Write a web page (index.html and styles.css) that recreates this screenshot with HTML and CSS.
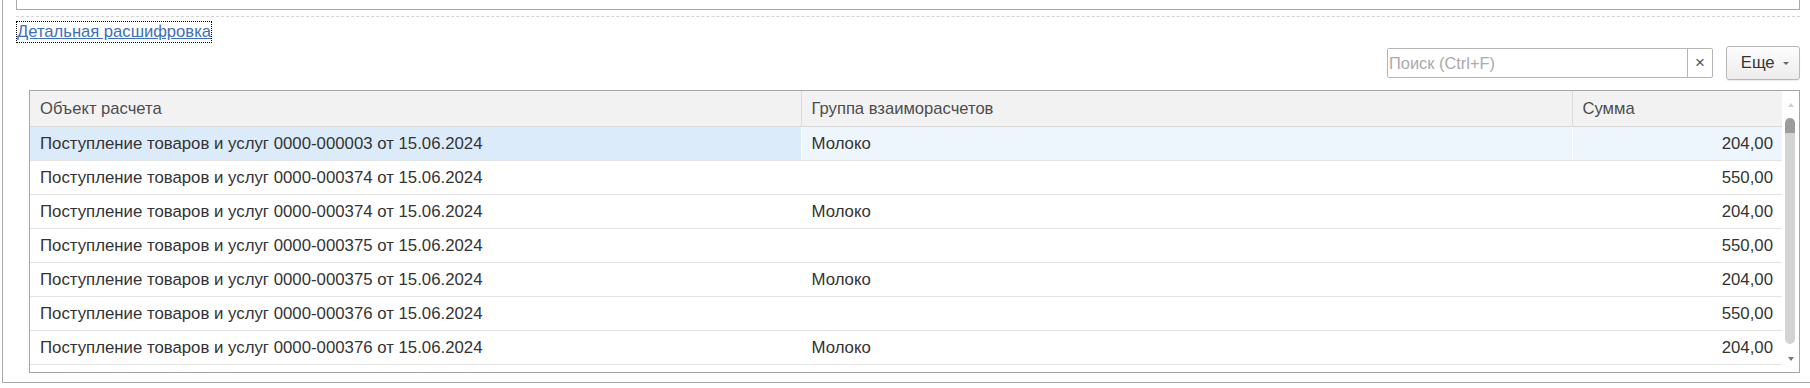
FILE: index.html
```html
<!DOCTYPE html>
<html lang="ru">
<head>
  <meta charset="UTF-8">
  <title>Детальная расшифровка</title>
  <link rel="stylesheet" href="styles.css">
</head>
<body>

  <div class="ramka">
    <div class="pole-sverhu"></div>
    <div class="razdelitel"></div>
    <a href="#" class="ssylka">Детальная расшифровка</a>

    <div class="panel">
      <div class="poisk">
        <input type="text" placeholder="Поиск (Ctrl+F)">
        <span class="ochistit">×</span>
      </div>
      <button class="esche">Еще <span class="strelka"></span></button>
    </div>

    <div class="spisok">
      <div class="oblast">
        <table>
          <colgroup>
            <col class="k1"><col class="k2"><col class="k3">
          </colgroup>
          <thead>
            <tr>
              <th>Объект расчета</th>
              <th>Группа взаиморасчетов</th>
              <th>Сумма</th>
            </tr>
          </thead>
          <tbody>
            <tr class="vybrana">
              <td>Поступление товаров и услуг 0000-000003 от 15.06.2024</td>
              <td>Молоко</td>
              <td class="chislo">204,00</td>
            </tr>
            <tr>
              <td>Поступление товаров и услуг 0000-000374 от 15.06.2024</td>
              <td></td>
              <td class="chislo">550,00</td>
            </tr>
            <tr>
              <td>Поступление товаров и услуг 0000-000374 от 15.06.2024</td>
              <td>Молоко</td>
              <td class="chislo">204,00</td>
            </tr>
            <tr>
              <td>Поступление товаров и услуг 0000-000375 от 15.06.2024</td>
              <td></td>
              <td class="chislo">550,00</td>
            </tr>
            <tr>
              <td>Поступление товаров и услуг 0000-000375 от 15.06.2024</td>
              <td>Молоко</td>
              <td class="chislo">204,00</td>
            </tr>
            <tr>
              <td>Поступление товаров и услуг 0000-000376 от 15.06.2024</td>
              <td></td>
              <td class="chislo">550,00</td>
            </tr>
            <tr>
              <td>Поступление товаров и услуг 0000-000376 от 15.06.2024</td>
              <td>Молоко</td>
              <td class="chislo">204,00</td>
            </tr>
          </tbody>
        </table>
      </div>
      <div class="prokrutka">
        <span class="vverh"></span>
        <span class="polzunok"></span>
        <span class="vniz"></span>
      </div>
    </div>
  </div>

</body>
</html>
```

FILE: styles.css
```css
html, body {
  margin: 0;
  padding: 0;
  background: #fff;
  overflow: hidden;
}
body {
  font-family: "Liberation Sans", Arial, sans-serif;
  font-size: 16.6px;
  color: #333;
}
.ramka {
  margin-left: 2px;
  width: 1830px;
  height: 382px;
  border-left: 1px solid #a9a9a9;
  border-bottom: 1px solid #a9a9a9;
}
.pole-sverhu {
  margin-left: 13px;
  width: 1782px;
  height: 9px;
  border: 1px solid #a9a9a9;
  border-top: none;
}
.razdelitel {
  margin: 6px 0 0 13px;
  width: 1784px;
  border-top: 1px dashed #d4d4d4;
}
.ssylka {
  display: block;
  width: max-content;
  margin: 4px 0 0 13px;
  padding: 1px 0 2px;
  color: #3d6fbd;
  line-height: 17px;
  border: 1px dotted #000;
}
.panel {
  display: flex;
  justify-content: flex-end;
  align-items: center;
  gap: 13px;
  width: 1797px;
  margin-top: 3px;
  height: 34px;
}
.poisk {
  display: flex;
  width: 324px;
  height: 28px;
  border: 1px solid #b5b5b5;
  border-radius: 2px;
  background: #fff;
}
.poisk input {
  flex: 1;
  min-width: 0;
  border: none;
  outline: none;
  padding: 0 1px;
  font: 16.4px "Liberation Sans", Arial, sans-serif;
  color: #333;
}
.poisk input::placeholder {
  color: #aaa;
}
.ochistit {
  width: 24px;
  border-left: 1px solid #b5b5b5;
  text-align: center;
  line-height: 27px;
  font-size: 17px;
  color: #555;
}
.esche {
  width: 74px;
  height: 34px;
  border: 1px solid #b8b8b8;
  border-radius: 3px;
  background: linear-gradient(#fdfdfd, #ececec);
  font: 16.6px "Liberation Sans", Arial, sans-serif;
  color: #333;
  padding: 0 0 0 4px;
  box-shadow: 0 1px 1px rgba(0,0,0,0.08);
}
.strelka {
  display: inline-block;
  margin-left: 4px;
  vertical-align: middle;
  border-left: 3px solid transparent;
  border-right: 3px solid transparent;
  border-top: 3px solid #666;
}
.spisok {
  display: flex;
  margin: 10px 0 0 26px;
  width: 1769px;
  height: 281px;
  border: 1px solid #a6a6a6;
}
.oblast {
  width: 1752px;
  overflow: hidden;
}
table {
  width: 1752px;
  border-collapse: collapse;
  table-layout: fixed;
}
.k1 { width: 771px; }
.k2 { width: 771px; }
.k3 { width: 210px; }
th {
  height: 35px;
  padding: 0 10px;
  background: #f2f2f2;
  border-bottom: 1px solid #d9d9d9;
  text-align: left;
  font-weight: normal;
  color: #4d4d4d;
}
th + th {
  border-left: 1px solid #dadada;
}
td {
  height: 33px;
  padding: 0 10px;
  border-bottom: 1px solid #e3e3e3;
  white-space: nowrap;
  font-size: 16.8px;
}
td + td {
  border-left: 1px solid #fff;
}
td.chislo {
  text-align: right;
  padding-right: 9px;
}
tr.vybrana td {
  background: #eef6fd;
}
tr.vybrana td:first-child {
  background: #dcebfa;
}
.prokrutka {
  position: relative;
  width: 17px;
  background: #fff;
}
.vverh, .vniz {
  position: absolute;
  left: 6px;
  border-left: 3px solid transparent;
  border-right: 3px solid transparent;
}
.vverh {
  top: 12px;
  border-bottom: 4px solid #cfcfcf;
}
.vniz {
  top: 266px;
  border-top: 4px solid #777;
}
.polzunok {
  position: absolute;
  top: 27px;
  left: 3px;
  width: 10px;
  height: 226px;
  border-radius: 5px;
  background: linear-gradient(#9c9c9c 0, #9c9c9c 15px, #d3d3d3 15px);
}
```
